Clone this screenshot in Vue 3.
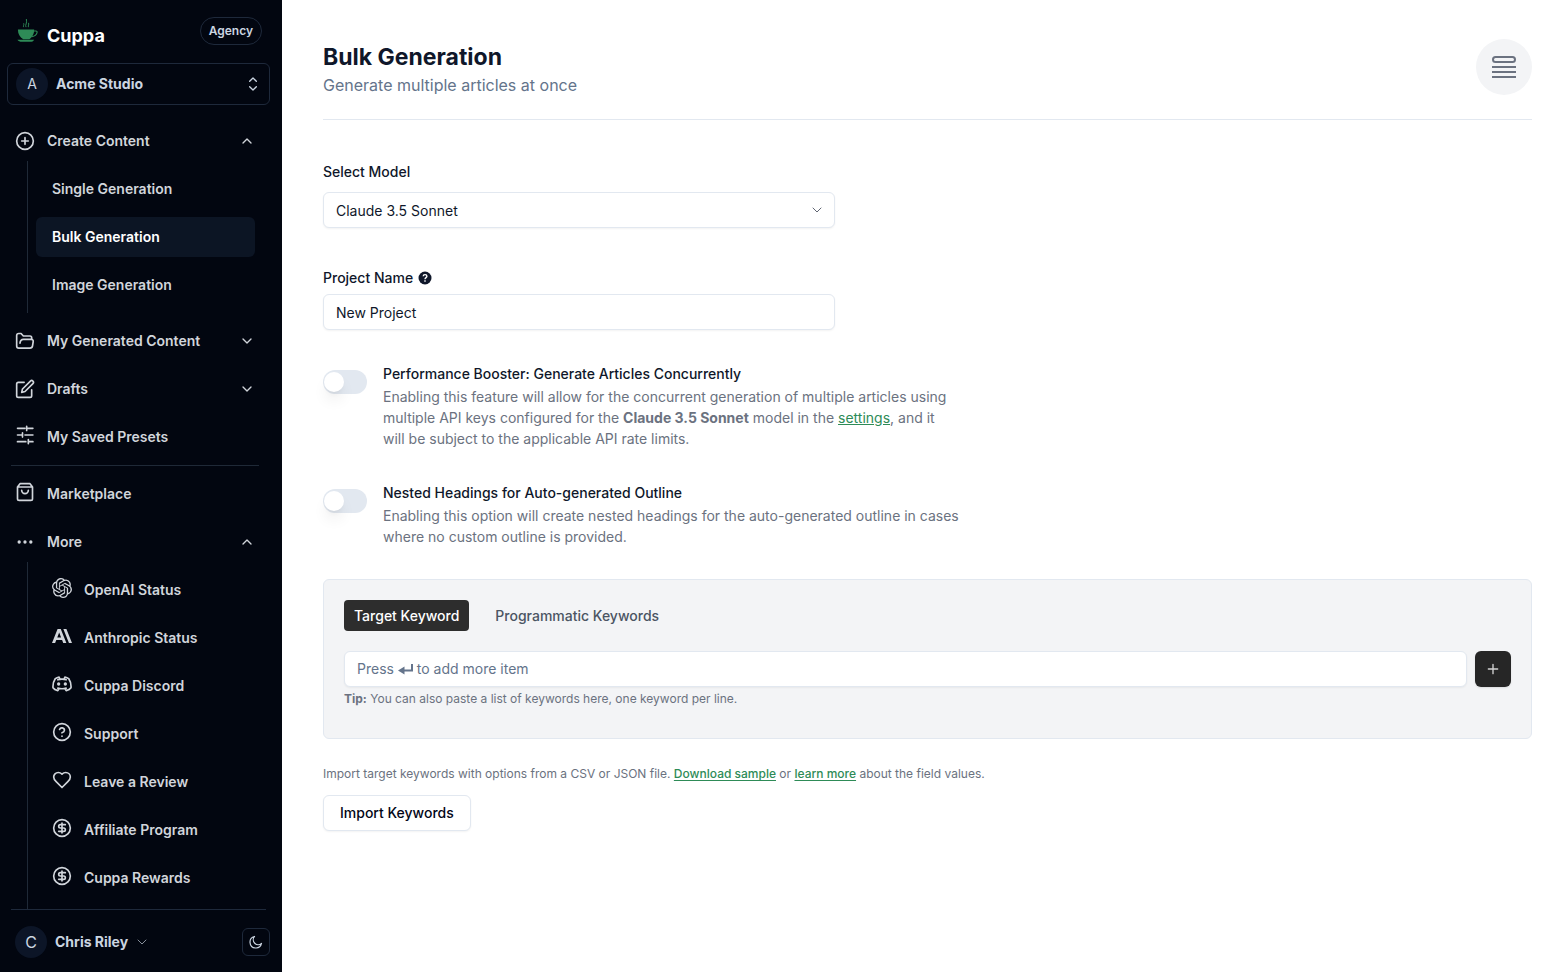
<template>
    <div class="shell">
        <aside class="sidebar">
            <div class="brand">
                <a class="logo" href="#">
                    <svg class="cup" viewBox="0 0 24 26" aria-hidden="true">
                        <path d="M2 12h17c0 5-2 8-5 10H7.500C4 20 2 17 2 12z" fill="currentColor" />
                        <path d="M18.500 13.500h2.200c1.200 0 1.500 1 1.200 2-.6 2-2.800 3.500-5.200 4" fill="none" stroke="currentColor" stroke-width="1.200" />
                        <path d="M1.500 22.600h17.500c-1 1.600-2.500 2.200-4 2.200H6c-2 0-3.500-.8-4.500-2.200z" fill="currentColor" />
                        <path d="M8 9.500c-1-1.500.8-2.200 0-4M10.500 9.500c-1.500-2 1.500-4 .3-8.500M13 9.500c-.8-1.600 1-2.600 0-4.500" fill="none" stroke="currentColor" stroke-width="1" />
                    </svg>
                    <span>Cuppa</span>
                </a>
                <span class="plan">Agency</span>
            </div>

            <button class="workspace" type="button">
                <span class="avatar">A</span>
                <span class="workspaceName">Acme Studio</span>
                <svg class="icon smallIcon" viewBox="0 0 24 24"><path d="m7 8 5-5 5 5M7 16l5 5 5-5" /></svg>
            </button>

            <nav class="nav">
                <template v-for="entry in menu" :key="entry.label">
                    <hr v-if="entry.divider" class="navDivider">
                    <a v-else-if="!entry.group" class="navRow" href="#">
                        <svg class="icon raised" viewBox="0 0 24 24"><path :d="icons[entry.icon]" /></svg>
                        <span>{{ entry.label }}</span>
                    </a>
                    <div v-else>
                        <button class="navRow" type="button" :aria-expanded="!!entry.open" @click="entry.open = !entry.open">
                            <svg class="icon" :class="{ solid: entry.solid }" viewBox="0 0 24 24"><path :d="icons[entry.icon]" /></svg>
                            <span>{{ entry.label }}</span>
                            <svg class="icon smallIcon chevron" viewBox="0 0 24 24">
                                <path :d="entry.open ? icons.up : icons.down" />
                            </svg>
                        </button>
                        <div v-if="entry.open" class="subMenu">
                            <a
                                v-for="item in entry.items"
                                :key="item.label"
                                class="subRow"
                                :class="{ active: item.active }"
                                href="#"
                            >
                                <svg
                                    v-if="item.icon"
                                    class="icon raised"
                                    :class="{ solid: item.solid }"
                                    viewBox="0 0 24 24"
                                ><path :d="icons[item.icon]" /></svg>
                                <span>{{ item.label }}</span>
                            </a>
                        </div>
                    </div>
                </template>
            </nav>

            <div class="account">
                <button class="user" type="button">
                    <span class="avatar">C</span>
                    <span>Chris Riley</span>
                    <svg class="icon smallIcon thin" viewBox="0 0 24 24"><path :d="icons.down" /></svg>
                </button>
                <button class="theme" type="button" aria-label="Toggle theme">
                    <svg class="icon" viewBox="0 0 24 24"><path d="M9.500 2.500a8.500 8.500 0 0 0 12 12A10 10 0 1 1 9.500 2.500z" /></svg>
                </button>
            </div>
        </aside>

        <main class="content">
            <header class="pageHeader">
                <div>
                    <h1>Bulk Generation</h1>
                    <p>Generate multiple articles at once</p>
                </div>
                <span class="headerIcon">
                    <svg viewBox="0 0 24 24" aria-hidden="true">
                        <rect x="1" y="2" width="22" height="5" rx="2.500" />
                        <path d="M0 12h24M0 17h24M0 22h24" />
                    </svg>
                </span>
            </header>

            <div class="field modelField">
                <label for="model">Select Model</label>
                <div class="selectWrap">
                    <select id="model" v-model="model">
                        <option>Claude 3.5 Sonnet</option>
                    </select>
                    <svg class="icon smallIcon thin" viewBox="0 0 24 24"><path :d="icons.down" /></svg>
                </div>
            </div>

            <div class="field">
                <div class="labelRow">
                    <label for="project">Project Name</label>
                    <svg class="help" viewBox="0 0 14 14" aria-hidden="true">
                        <circle cx="7" cy="7" r="6.500" fill="currentColor" />
                        <path d="M5.200 5.300c.1-2.300 3.700-2.200 3.700 0C8.900 6.700 7 6.600 7 8.200M7 9.300v1.500" fill="none" stroke="#fff" stroke-width="1.400" />
                    </svg>
                </div>
                <input id="project" v-model="project" class="textInput" type="text">
            </div>

            <div class="option">
                <input id="booster" v-model="booster" class="switch" type="checkbox" role="switch">
                <div>
                    <label for="booster">Performance Booster: Generate Articles Concurrently</label>
                    <p>
                        Enabling this feature will allow for the concurrent generation of multiple articles using
                        multiple API keys configured for the <strong>{{ model }}</strong> model in the
                        <a href="#">settings</a>, and it will be subject to the applicable API rate limits.
                    </p>
                </div>
            </div>

            <div class="option">
                <input id="nested" v-model="nested" class="switch" type="checkbox" role="switch">
                <div>
                    <label for="nested">Nested Headings for Auto-generated Outline</label>
                    <p>
                        Enabling this option will create nested headings for the auto-generated outline in cases
                        where no custom outline is provided.
                    </p>
                </div>
            </div>

            <section class="panel">
                <div class="tabs" role="tablist">
                    <button
                        v-for="name in tabs"
                        :key="name"
                        type="button"
                        role="tab"
                        :aria-selected="tab === name"
                        :class="{ selected: tab === name }"
                        @click="tab = name"
                    >
                        {{ name }}
                    </button>
                </div>
                <div class="keywordRow">
                    <div class="keywordBox">
                        <input id="keyword" v-model="keyword" class="textInput" type="text">
                        <label v-if="!keyword" for="keyword" class="hint">
                            Press
                            <svg viewBox="0 0 15 12" aria-label="Enter">
                                <path d="M14 0v6.500H5" fill="none" stroke="currentColor" stroke-width="2" />
                                <path d="M0 6.500l6.500-4v8z" fill="currentColor" />
                            </svg>
                            to add more item
                        </label>
                    </div>
                    <button class="add" type="button" aria-label="Add keyword">
                        <svg class="icon smallIcon" viewBox="0 0 24 24"><path d="M5 12h14M12 5v14" /></svg>
                    </button>
                </div>
                <p class="tip"><strong>Tip:</strong> You can also paste a list of keywords here, one keyword per line.</p>
            </section>

            <p class="importText">
                Import target keywords with options from a CSV or JSON file.
                <button type="button" class="textLink">Download sample</button> or
                <a href="#">learn more</a> about the field values.
            </p>
            <button class="importButton" type="button">Import Keywords</button>
        </main>
    </div>
</template>

<script setup>
import { reactive, ref } from 'vue'

const model = ref('Claude 3.5 Sonnet')
const project = ref('New Project')
const booster = ref(false)
const nested = ref(false)
const keyword = ref('')

const tabs = [ 'Target Keyword', 'Programmatic Keywords' ]
const tab = ref(tabs[0])

const icons = {
    up: 'm6 15 6-6 6 6',
    down: 'm6 9 6 6 6-6',
    plus: 'M22 12a10 10 0 1 1-20 0 10 10 0 0 1 20 0zM8 12h8M12 8v8',
    folder: 'M6 14.500c.3-3 1.500-4.500 4-4.500h9.500c2 0 2.600 1.500 2.300 3l-.8 5c-.3 1.700-1.200 2.500-3 2.500H4.500C3 20.500 2 19.500 2 18V5.500C2 4 3 3 4.500 3h2.800L10 6h8c1.300 0 2 .8 2 2v2',
    edit: 'M11 4H4a2 2 0 0 0-2 2v14a2 2 0 0 0 2 2h14a2 2 0 0 0 2-2v-7M18.500 2.500a2.120 2.120 0 0 1 3 3L12 15l-4 1 1-4Z',
    sliders: 'M3 4h9M14 1.500v5M14 4h7.500M3 12h6M9 9.500v5M12 12h9.500M3 20h10M16 17.500v5M16 20h5.500',
    bag: 'M6 2 3 6v14a2 2 0 0 0 2 2h14a2 2 0 0 0 2-2V6l-3-4ZM3 6h18M16 10a4 4 0 0 1-8 0',
    dots: 'M7 12a2 2 0 1 1-4 0 2 2 0 0 1 4 0zM14 12a2 2 0 1 1-4 0 2 2 0 0 1 4 0zM21 12a2 2 0 1 1-4 0 2 2 0 0 1 4 0z',
    openai: 'M22.2819 9.8211a5.9847 5.9847 0 0 0-.5157-4.9108 6.0462 6.0462 0 0 0-6.5098-2.9A6.0651 6.0651 0 0 0 4.9807 4.1818a5.9847 5.9847 0 0 0-3.9977 2.9 6.0462 6.0462 0 0 0 .7427 7.0966 5.98 5.98 0 0 0 .511 4.9107 6.051 6.051 0 0 0 6.5146 2.9001A5.9847 5.9847 0 0 0 13.2599 24a6.0557 6.0557 0 0 0 5.7718-4.2058 5.9894 5.9894 0 0 0 3.9977-2.9001 6.0557 6.0557 0 0 0-.7475-7.0729zm-9.022 12.6081a4.4755 4.4755 0 0 1-2.8764-1.0408l.1419-.0804 4.7783-2.7582a.7948.7948 0 0 0 .3927-.6813v-6.7369l2.02 1.1686a.071.071 0 0 1 .038.052v5.5826a4.504 4.504 0 0 1-4.4945 4.4944zm-9.6607-4.1254a4.4708 4.4708 0 0 1-.5346-3.0137l.142.0852 4.783 2.7582a.7712.7712 0 0 0 .7806 0l5.8428-3.3685v2.3324a.0804.0804 0 0 1-.0332.0615L9.74 19.9502a4.4992 4.4992 0 0 1-6.1408-1.6464zM2.3408 7.8956a4.485 4.485 0 0 1 2.3655-1.9728V11.6a.7664.7664 0 0 0 .3879.6765l5.8144 3.3543-2.0201 1.1685a.0757.0757 0 0 1-.071 0l-4.8303-2.7865A4.504 4.504 0 0 1 2.3408 7.872zm16.5963 3.8558L13.1038 8.364 15.1192 7.2a.0757.0757 0 0 1 .071 0l4.8303 2.7913a4.4944 4.4944 0 0 1-.6765 8.1042v-5.6772a.79.79 0 0 0-.407-.667zm2.0107-3.0231l-.142-.0852-4.7735-2.7818a.7759.7759 0 0 0-.7854 0L9.409 9.2297V6.8974a.0662.0662 0 0 1 .0284-.0615l4.8303-2.7866a4.4992 4.4992 0 0 1 6.6802 4.66zM8.3065 12.863l-2.02-1.1638a.0804.0804 0 0 1-.038-.0567V6.0742a4.4992 4.4992 0 0 1 7.3757-3.4537l-.142.0805L8.704 5.459a.7948.7948 0 0 0-.3927.6813zm1.0976-2.3654l2.602-1.4998 2.6069 1.4998v2.9994l-2.5974 1.4997-2.6067-1.4997Z',
    anthropic: 'M17.3041 3.541h-3.6718l6.696 16.918H24Zm-10.6082 0L0 20.459h3.7442l1.3693-3.5527h7.0052l1.3693 3.5528h3.7442L10.5363 3.5409Zm-.3712 10.2232 2.2914-5.9456 2.2914 5.9456Z',
    discord: 'M7 17c3.500 1 6.500 1 10 0M15.500 17.500l1.500 2.500c2-.5 4.500-1.500 5.800-3.500.3-4-.8-8-2.800-11C18.500 4.500 17 4 15.500 3.700L14.500 6h-5l-1-2.300C7 4 5.500 4.500 4 5.500c-2 3-3.100 7-2.800 11C2.500 18.500 5 19.500 7 20l1.500-2.500M7 7c3.300-1.200 6.700-1.200 10 0M9 12a1 1 0 1 1-2 0 1 1 0 0 1 2 0zM17 12a1 1 0 1 1-2 0 1 1 0 0 1 2 0z',
    help: 'M22 12a10 10 0 1 1-20 0 10 10 0 0 1 20 0zM9.090 9a3 3 0 0 1 5.830 1c0 2-3 3-3 3M12 17h.01',
    heart: 'M19 14c1.490-1.460 3-3.210 3-5.500A5.500 5.500 0 0 0 16.500 3c-1.760 0-3 .5-4.500 2-1.500-1.500-2.740-2-4.500-2A5.500 5.500 0 0 0 2 8.500c0 2.300 1.500 4.050 3 5.500l7 7Z',
    dollar: 'M22 12a10 10 0 1 1-20 0 10 10 0 0 1 20 0zM16 8h-6a2 2 0 1 0 0 4h4a2 2 0 1 1 0 4H8M12 18V6'
}

const menu = reactive([
    {
        label: 'Create Content', icon: 'plus', group: true, open: true,
        items: [
            { label: 'Single Generation' },
            { label: 'Bulk Generation', active: true },
            { label: 'Image Generation' }
        ]
    },
    { label: 'My Generated Content', icon: 'folder', group: true, items: [] },
    { label: 'Drafts', icon: 'edit', group: true, items: [] },
    { label: 'My Saved Presets', icon: 'sliders' },
    { label: 'divider', divider: true },
    { label: 'Marketplace', icon: 'bag' },
    {
        label: 'More', icon: 'dots', solid: true, group: true, open: true,
        items: [
            { label: 'OpenAI Status', icon: 'openai', solid: true },
            { label: 'Anthropic Status', icon: 'anthropic', solid: true },
            { label: 'Cuppa Discord', icon: 'discord' },
            { label: 'Support', icon: 'help' },
            { label: 'Leave a Review', icon: 'heart' },
            { label: 'Affiliate Program', icon: 'dollar' },
            { label: 'Cuppa Rewards', icon: 'dollar' }
        ]
    }
])
</script>

<style>
body {
    margin: 0;
    background: #fff;
}
</style>

<style scoped>
.shell {
    display: flex;
    min-height: 100vh;
    font-family: Inter, "Liberation Sans", sans-serif;
    font-size: 14px;
    line-height: 20px;
    color: #0f172a;
}

.shell *,
.shell *::before {
    box-sizing: border-box;
}

button,
input,
select {
    font: inherit;
    color: inherit;
}

button {
    padding: 0;
    border: none;
    background: none;
    cursor: pointer;
}

h1,
p {
    margin: 0;
}

.icon {
    width: 20px;
    height: 20px;
    flex: none;
    fill: none;
    stroke: currentColor;
    stroke-width: 2;
    stroke-linecap: round;
    stroke-linejoin: round;
}

.solid {
    fill: currentColor;
    stroke: none;
}

.smallIcon {
    width: 16px;
    height: 16px;
}

.raised {
    margin-bottom: 4px;
}

/* sidebar */
.sidebar {
    display: flex;
    flex-direction: column;
    flex: none;
    position: sticky;
    top: 0;
    width: 282px;
    height: 100vh;
    background: #020610;
    color: #d1d5db;
    font-weight: 600;
}

.brand {
    display: flex;
    justify-content: space-between;
    align-items: flex-start;
    padding: 17px 20px 0 16px;
    height: 63px;
}

.logo {
    display: flex;
    gap: 8px;
    color: #fff;
    font-size: 18px;
    font-weight: 700;
    line-height: 38px;
    text-decoration: none;
}

.cup {
    width: 23px;
    height: 27px;
    color: #2e8b57;
}

.plan {
    padding: 0 8px;
    border: 1px solid #1e293b;
    border-radius: 14px;
    color: #cbd5e1;
    font-size: 12px;
    line-height: 26px;
}

.workspace {
    display: flex;
    align-items: center;
    gap: 8px;
    margin: 0 12px 16px 7px;
    padding: 4px 8px;
    border: 1px solid #1e293b;
    border-radius: 6px;
    color: #cbd5e1;
    font-weight: 700;
    text-align: left;
}

.workspaceName {
    flex: 1;
    line-height: 22px;
}

.avatar {
    width: 32px;
    height: 32px;
    border-radius: 50%;
    background: #0c1527;
    font-weight: 400;
    line-height: 32px;
    text-align: center;
}

.nav {
    display: flex;
    flex-direction: column;
    flex: 1;
    gap: 8px;
    min-height: 0;
    overflow: hidden;
}

.nav > * {
    flex: none;
}

.navRow {
    display: flex;
    align-items: center;
    gap: 12px;
    width: 100%;
    height: 40px;
    padding: 0 27px 0 15px;
    color: inherit;
    text-decoration: none;
}

.chevron {
    margin-left: auto;
}

.navDivider {
    width: 248px;
    margin: 0 0 0 11px;
    border: none;
    border-top: 1px solid #1f2937;
}

.subMenu {
    display: flex;
    flex-direction: column;
    gap: 8px;
    margin: 0 27px;
    padding: 8px 0 8px 8px;
    border-left: 1px solid #1f2937;
}

.nav > :last-child .subMenu {
    padding-bottom: 16px;
}

.subRow {
    display: flex;
    align-items: center;
    gap: 12px;
    height: 40px;
    padding: 0 16px;
    border-radius: 6px;
    color: inherit;
    text-decoration: none;
}

.active {
    background: #0c1524;
    color: #fff;
}

.account {
    display: flex;
    justify-content: space-between;
    align-items: center;
    height: 63px;
    margin: 0 12px 0 11px;
    padding: 2px 0 0 4px;
    background: linear-gradient(#1e293b, #1e293b) 0 0 / calc(100% - 4px) 1px no-repeat;
    color: #cbd5e1;
}

.user {
    display: flex;
    align-items: center;
    gap: 8px;
    font-weight: 700;
}

.user .avatar {
    font-size: 16px;
}

.user .icon {
    margin-left: -2px;
}

.thin {
    stroke-width: 1;
}

.theme {
    display: flex;
    justify-content: center;
    align-items: center;
    width: 28px;
    height: 28px;
    border: 1px solid #1e293b;
    border-radius: 6px;
}

.theme .icon {
    width: 14px;
    height: 14px;
}

/* page */
.content {
    flex: 1;
    min-width: 0;
    padding: 39px 35px 40px 41px;
}

.pageHeader {
    display: flex;
    justify-content: space-between;
    padding-bottom: 24px;
    border-bottom: 1px solid #e2e8f0;
}

h1 {
    font-size: 23px;
    font-weight: 700;
    line-height: 36px;
}

.pageHeader p {
    color: #64748b;
    font-size: 16px;
    line-height: 20px;
}

.headerIcon {
    display: flex;
    justify-content: center;
    align-items: center;
    width: 56px;
    height: 56px;
    border-radius: 50%;
    background: #f3f4f6;
}

.headerIcon svg {
    width: 24px;
    height: 24px;
    fill: none;
    stroke: #6b7280;
    stroke-width: 2;
}

.field {
    max-width: 512px;
    margin-bottom: 34px;
}

.field label {
    display: block;
    font-weight: 500;
}

.modelField {
    margin: 42px 0 40px;
}

.modelField label {
    margin-bottom: 10px;
}

.labelRow {
    display: flex;
    align-items: center;
    gap: 5px;
    margin-bottom: 6px;
}

.help {
    width: 14px;
    height: 14px;
}

.selectWrap {
    position: relative;
}

select,
.textInput {
    display: block;
    width: 100%;
    height: 36px;
    padding: 0 12px;
    border: 1px solid #e2e8f0;
    border-radius: 6px;
    background: #fff;
    box-shadow: 0 1px 2px rgba(0, 0, 0, 0.05);
}

select {
    padding-top: 2px;
    appearance: none;
}

.selectWrap .icon {
    position: absolute;
    top: 10px;
    right: 10px;
    pointer-events: none;
}

.option {
    display: flex;
    align-items: flex-start;
    gap: 16px;
    max-width: 640px;
    margin-bottom: 34px;
}

.option + .option {
    margin-bottom: 32px;
}

.option label {
    display: block;
    margin-bottom: 2px;
    font-weight: 500;
}

.option p {
    max-width: 576px;
    color: #6b7280;
    line-height: 21px;
}

.content a,
.textLink {
    color: #2e8b57;
    text-decoration: underline;
}

.switch {
    appearance: none;
    flex: none;
    width: 44px;
    height: 24px;
    margin: 6px 0 0;
    padding: 2px 1px;
    border-radius: 12px;
    background: #e2e8f0;
    cursor: pointer;
}

.switch::before {
    content: "";
    display: block;
    width: 20px;
    height: 20px;
    border-radius: 50%;
    background: #fff;
    box-shadow: 0 10px 15px -3px rgba(0, 0, 0, 0.1), 0 4px 6px -4px rgba(0, 0, 0, 0.1);
}

.switch:checked {
    padding-left: 22px;
    background: #2e8b57;
}

.panel {
    margin-bottom: 25px;
    padding: 20px 20px 29px;
    border: 1px solid #e2e8f0;
    border-radius: 6px;
    background: #f3f4f6;
}

.tabs {
    display: flex;
    gap: 16px;
    margin-bottom: 20px;
}

.tabs button {
    padding: 0 10px;
    border-radius: 4px;
    color: #4b5563;
    font-weight: 500;
    line-height: 31px;
}

.tabs .selected {
    background: #2d2d2d;
    color: #fff;
}

.keywordRow {
    display: flex;
    gap: 8px;
}

.keywordBox {
    flex: 1;
    position: relative;
}

/* sits over the empty input so the key symbol can be drawn */
.hint {
    position: absolute;
    top: 8px;
    left: 13px;
    color: #64748b;
    cursor: text;
}

.hint svg {
    width: 15px;
    height: 12px;
    vertical-align: -2px;
}

.add {
    display: flex;
    justify-content: center;
    align-items: center;
    width: 36px;
    height: 36px;
    border-radius: 6px;
    background: #262626;
    color: #d4d4d4;
    box-shadow: 0 1px 2px rgba(0, 0, 0, 0.1);
}

.tip,
.importText {
    color: #6b7280;
    font-size: 12px;
    line-height: 20px;
}

.tip {
    margin-top: 2px;
}

.importText {
    margin-bottom: 11px;
}

.importText a,
.textLink {
    font-weight: 500;
    text-underline-offset: 2px;
}

.importButton {
    height: 36px;
    padding: 0 16px;
    border: 1px solid #e2e8f0;
    border-radius: 6px;
    background: #fff;
    box-shadow: 0 1px 2px rgba(0, 0, 0, 0.05);
    color: #020617;
    font-weight: 500;
}
</style>
